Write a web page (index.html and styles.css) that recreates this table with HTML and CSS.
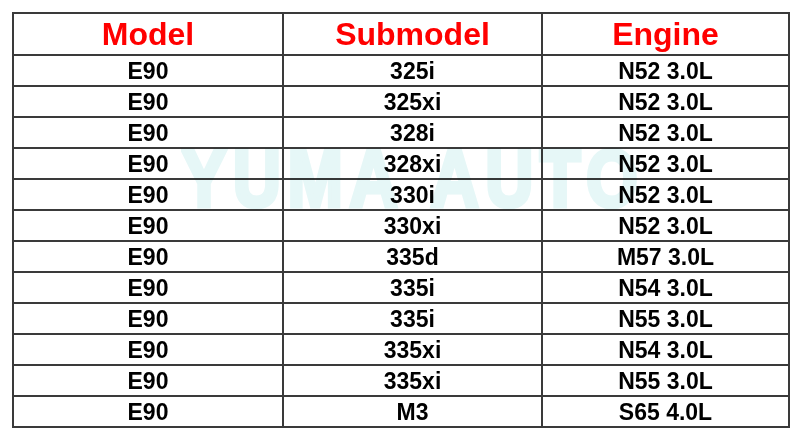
FILE: index.html
```html
<!DOCTYPE html>
<html>
<head>
<meta charset="utf-8">
<link rel="stylesheet" href="styles.css">
</head>
<body>
<div class="page">
  <div class="sheet">
    <div class="cell head">Model</div><div class="cell head">Submodel</div><div class="cell head">Engine</div>
    <div class="cell">E90</div><div class="cell">325i</div><div class="cell">N52 3.0L</div>
    <div class="cell">E90</div><div class="cell">325xi</div><div class="cell">N52 3.0L</div>
    <div class="cell">E90</div><div class="cell">328i</div><div class="cell">N52 3.0L</div>
    <div class="cell">E90</div><div class="cell">328xi</div><div class="cell">N52 3.0L</div>
    <div class="cell">E90</div><div class="cell">330i</div><div class="cell">N52 3.0L</div>
    <div class="cell">E90</div><div class="cell">330xi</div><div class="cell">N52 3.0L</div>
    <div class="cell">E90</div><div class="cell">335d</div><div class="cell">M57 3.0L</div>
    <div class="cell">E90</div><div class="cell">335i</div><div class="cell">N54 3.0L</div>
    <div class="cell">E90</div><div class="cell">335i</div><div class="cell">N55 3.0L</div>
    <div class="cell">E90</div><div class="cell">335xi</div><div class="cell">N54 3.0L</div>
    <div class="cell">E90</div><div class="cell">335xi</div><div class="cell">N55 3.0L</div>
    <div class="cell">E90</div><div class="cell">M3</div><div class="cell">S65 4.0L</div>
  </div>
  <div class="watermark">YUMA AUTO</div>
</div>
</body>
</html>
```
FILE: styles.css
```css
html, body {
  margin: 0;
  padding: 0;
  background: #ffffff;
}
.page {
  position: relative;
  width: 800px;
  height: 439px;
  padding: 12px 0 0 12px;
  box-sizing: border-box;
  font-family: "Liberation Sans", Arial, sans-serif;
  font-weight: bold;
}
.sheet {
  display: grid;
  grid-template-columns: 268px 257px 245px;
  grid-template-rows: 40px repeat(12, 29px);
  gap: 2px;
  padding: 2px;
  width: 778px;
  box-sizing: border-box;
  background: #3a3a3a;
}
.cell {
  background: #ffffff;
  color: #000000;
  font-size: 23px;
  display: flex;
  align-items: center;
  justify-content: center;
  padding-top: 2px;
  box-sizing: border-box;
}
.head {
  color: #ff0000;
  font-size: 32px;
  padding-top: 0;
}
.watermark {
  position: absolute;
  left: 182px;
  top: 138px;
  font-size: 66px;
  font-weight: bold;
  letter-spacing: 7px;
  word-spacing: 6px;
  line-height: 1;
  color: #e6f7f7;
  -webkit-text-stroke: 4px #e6f7f7;
  white-space: nowrap;
  transform: scaleY(1.22);
  transform-origin: top left;
  mix-blend-mode: multiply;
  pointer-events: none;
}
```
